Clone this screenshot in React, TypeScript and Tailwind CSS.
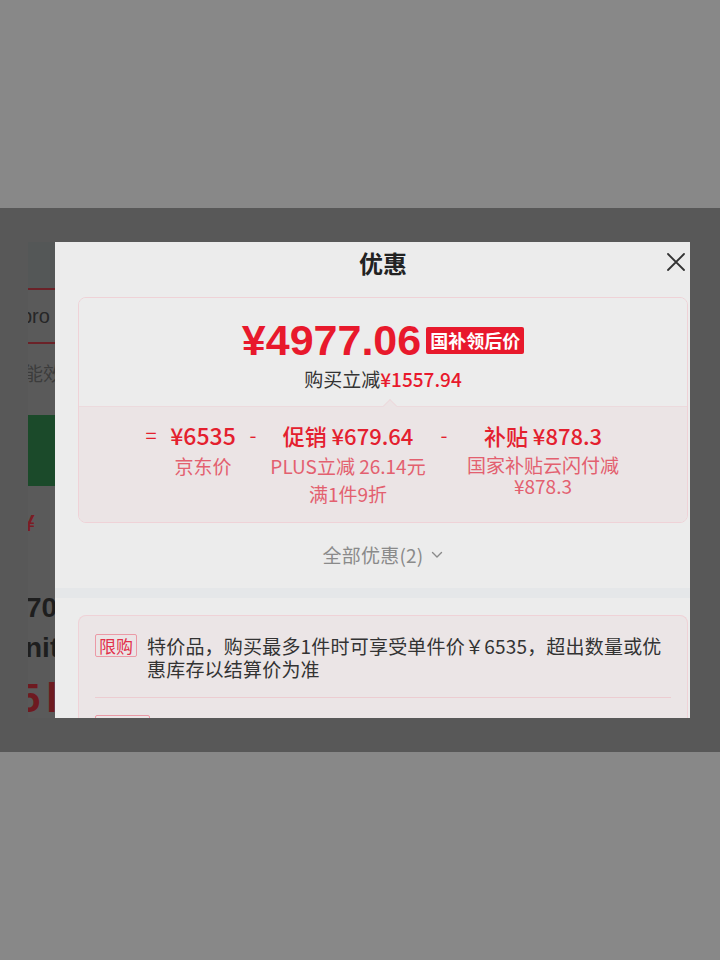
import React from "react";

const cjk = { fontFamily: '"Noto Sans CJK SC", "Noto Sans", sans-serif' };
const num = { fontFamily: '"Liberation Sans", "Noto Sans CJK SC", sans-serif' };

function CloseIcon() {
  return (
    <svg width="20" height="20" viewBox="0 0 20 20" fill="none">
      <path d="M2 2 L18 18 M18 2 L2 18" stroke="#333" strokeWidth="1.8" strokeLinecap="round" />
    </svg>
  );
}

function Chevron() {
  return (
    <svg width="12" height="8" viewBox="0 0 12 8" fill="none">
      <path d="M1.5 1.5 L6 6 L10.5 1.5" stroke="#8a8a8a" strokeWidth="1.4" strokeLinecap="round" strokeLinejoin="round" />
    </svg>
  );
}

// Dimmed product page visible behind the sheet
function PageBehind() {
  return (
    <div className="w-[27px] h-[476px] shrink-0 overflow-hidden bg-[#5a5a5a] flex flex-col">
      <div className="h-[46px] shrink-0 bg-[#545757]" />
      <div className="h-[2px] shrink-0 bg-[#6b2228]" />
      <div className="h-[52px] shrink-0 flex items-center">
        <span className="ml-[-7px] text-[20px] leading-none text-[#262626] whitespace-nowrap" style={num}>pro</span>
      </div>
      <div className="h-[2px] shrink-0 bg-[#6b2228]" />
      <div className="h-[56px] shrink-0 flex items-center">
        <span className="ml-[-4px] text-[19px] leading-none text-[#3c3c3c] whitespace-nowrap" style={cjk}>能效</span>
      </div>
      <div className="h-[15px] shrink-0" />
      <div className="h-[71px] shrink-0 bg-[#1b4a2a]" />
      <div className="h-[24px] shrink-0" />
      <div className="h-[22px] shrink-0 flex items-center">
        <span className="ml-[-6px] text-[22px] font-bold leading-none text-[#7a1d24]" style={cjk}>¥</span>
      </div>
      <div className="h-[56px] shrink-0" />
      <div className="h-[40px] shrink-0 flex items-center">
        <span className="ml-[-2px] text-[28px] font-bold leading-none text-[#1e1e1e] whitespace-nowrap" style={num}>70</span>
      </div>
      <div className="h-[40px] shrink-0 flex items-center">
        <span className="ml-[-3px] text-[28px] font-bold leading-none text-[#1e1e1e] whitespace-nowrap" style={num}>nit</span>
      </div>
      <div className="h-[50px] shrink-0 pt-[10px] flex items-start whitespace-nowrap">
        <span className="ml-[-10px] text-[40px] font-bold leading-[40px] text-[#6e1a20]" style={num}>5</span>
        <span className="ml-[6px] text-[40px] font-bold leading-[40px] text-[#6e1a20]" style={num}>l</span>
      </div>
    </div>
  );
}

function Breakdown() {
  return (
    <div className="relative bg-[#ebe4e5] border-t border-[#ecdadd] pt-[14px] pb-[16px]">
      <div className="absolute left-[306px] top-[-6px] w-[10px] h-[10px] rotate-45 bg-[#ebe4e5] border-l border-t border-[#ecdadd]" />
      <div className="flex pl-[62px] items-start">
        <div className="w-[20px] text-center text-[20px] leading-[28px] text-[#e4202e]" style={cjk}>=</div>
        <div className="w-[84px] flex flex-col items-center">
          <div className="text-[23px] font-medium leading-[28px] text-[#e4202e] whitespace-nowrap" style={cjk}>¥6535</div>
          <div className="mt-[5px] text-[19px] leading-[24px] text-[#e3606f]" style={cjk}>京东价</div>
        </div>
        <div className="w-[16px] text-center text-[20px] leading-[28px] text-[#e4202e]" style={cjk}>-</div>
        <div className="ml-[1px] w-[172px] flex flex-col items-center">
          <div className="text-[22px] font-medium leading-[28px] text-[#e4202e] whitespace-nowrap" style={cjk}>促销 ¥679.64</div>
          <div className="mt-[5px] text-[19px] leading-[24px] text-[#e3606f] whitespace-nowrap" style={cjk}>PLUS立减 26.14元</div>
          <div className="mt-[4px] text-[19px] leading-[24px] text-[#e3606f] whitespace-nowrap" style={cjk}>满1件9折</div>
        </div>
        <div className="ml-[2px] w-[16px] text-center text-[20px] leading-[28px] text-[#e4202e]" style={cjk}>-</div>
        <div className="ml-[6px] w-[170px] flex flex-col items-center">
          <div className="text-[22px] font-medium leading-[28px] text-[#e4202e] whitespace-nowrap" style={cjk}>补贴 ¥878.3</div>
          <div className="mt-[5px] text-[19px] leading-[21px] text-[#e3606f] text-center whitespace-nowrap" style={cjk}>
            国家补贴云闪付减
            <br />
            ¥878.3
          </div>
        </div>
      </div>
    </div>
  );
}

function PriceCard() {
  return (
    <div className="mx-[23px] rounded-[8px] border border-[#efd2d7] overflow-hidden">
      <div className="bg-[#ececec] pt-[19px] pb-[15px] flex flex-col items-center">
        <div className="h-[42px] flex items-center gap-[5px]">
          <span className="mt-[4px] text-[43px] font-bold leading-none text-[#e8192c]" style={num}>¥4977.06</span>
          <span className="mt-[4px] h-[27px] px-[4px] rounded-[2px] bg-[#e8192c] text-white text-[18px] font-bold leading-[27px]" style={cjk}>国补领后价</span>
        </div>
        <div className="mt-[8px] text-[19px] leading-[24px] whitespace-nowrap" style={cjk}>
          <span className="text-[#333]">购买立减</span>
          <span className="text-[#e8192c] font-medium">¥1557.94</span>
        </div>
      </div>
      <Breakdown />
    </div>
  );
}

function RuleCard() {
  return (
    <div className="mx-[23px] rounded-t-[8px] border border-b-0 border-[#efd2d7] bg-[#ebe5e6] pl-[16px] pr-[10px] pt-[18px]">
      <div className="flex items-start">
        <span className="shrink-0 h-[23px] w-[42px] border border-[#eb9aa6] rounded-[2px] text-center text-[17px] leading-[21px] text-[#e2314b]" style={cjk}>限购</span>
        <p className="ml-[10px] text-[19px] leading-[23px] tracking-[0.2px] text-[#333] whitespace-nowrap" style={cjk}>
          特价品，购买最多1件时可享受单件价￥6535，超出数量或优
          <br />
          惠库存以结算价为准
        </p>
      </div>
      <div className="mt-[17px] mr-[6px] h-px bg-[#ecccd1]" />
      <div className="mt-[17px] flex items-start">
        <span className="shrink-0 h-[23px] w-[55px] border border-[#eb9aa6] rounded-[2px] text-center text-[17px] leading-[21px] text-[#e2314b]" style={cjk}>新人价</span>
      </div>
    </div>
  );
}

function Sheet() {
  return (
    <div className="w-[656px] h-[476px] shrink-0 bg-[#ececec] overflow-hidden flex flex-col">
      <div className="relative h-[55px] shrink-0 flex justify-center pt-[7px]">
        <span className="text-[24px] font-bold leading-[28px] text-[#222]" style={cjk}>优惠</span>
        <div className="absolute right-[25px] top-[10px]">
          <CloseIcon />
        </div>
      </div>
      <div className="shrink-0">
        <PriceCard />
      </div>
      <div className="shrink-0 mt-[20px] h-[24px] flex items-center justify-center gap-[8px]">
        <span className="text-[19px] leading-[24px] tracking-[0.2px] text-[#8a8a8a]" style={cjk}>全部优惠(2)</span>
        <Chevron />
      </div>
      <div className="shrink-0 mt-[21px] h-[10px] bg-[#e5e7e9]" />
      <div className="shrink-0 mt-[17px]">
        <RuleCard />
      </div>
    </div>
  );
}

export default function App() {
  return (
    <div className="w-[720px] h-[960px] flex flex-col overflow-hidden">
      <div className="h-[208px] shrink-0 bg-[#888888]" />
      <div className="h-[544px] shrink-0 bg-[#585858] pt-[34px] pl-[28px]">
        <div className="w-[662px] h-[476px] flex overflow-hidden">
          <PageBehind />
          <Sheet />
        </div>
      </div>
      <div className="h-[208px] shrink-0 bg-[#888888]" />
    </div>
  );
}
